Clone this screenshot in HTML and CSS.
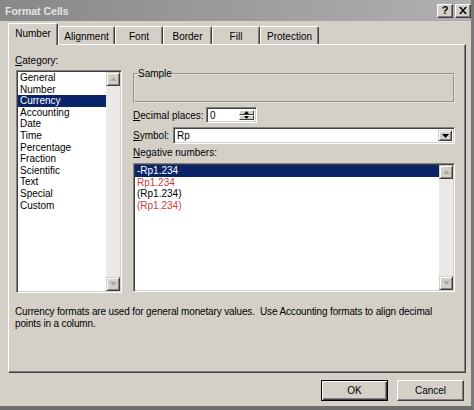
FILE: index.html
```html
<!DOCTYPE html>
<html>
<head>
<meta charset="utf-8">
<link rel="stylesheet" href="styles.css">
</head>
<body>
<div class="window">
  <div class="titlebar">
    <span class="title">Format Cells</span>
    <div class="tb-btns">
      <span class="tb-btn">?</span>
      <span class="tb-btn">
        <svg width="8" height="7" viewBox="0 0 8 7"><path d="M0 0h2l2 2.5L6 0h2L5 3.5 8 7H6L4 4.5 2 7H0l3-3.5z" fill="#000"/></svg>
      </span>
    </div>
  </div>

  <div class="tabs">
    <div class="tab active w-number">Number</div>
    <div class="tab w-align">Alignment</div>
    <div class="tab w-font">Font</div>
    <div class="tab w-border">Border</div>
    <div class="tab w-fill">Fill</div>
    <div class="tab w-prot">Protection</div>
  </div>

  <div class="panel">
    <div class="cols">
      <div class="left-col">
        <div class="label"><u>C</u>ategory:</div>
        <div class="listbox cat-list">
          <div class="items">
            <div class="item">General</div>
            <div class="item">Number</div>
            <div class="item sel">Currency</div>
            <div class="item">Accounting</div>
            <div class="item">Date</div>
            <div class="item">Time</div>
            <div class="item">Percentage</div>
            <div class="item">Fraction</div>
            <div class="item">Scientific</div>
            <div class="item">Text</div>
            <div class="item">Special</div>
            <div class="item">Custom</div>
          </div>
          <div class="scrollbar">
            <div class="sb-btn"><svg width="7" height="4" viewBox="0 0 7 4"><path d="M3.5 0L7 4H0z" fill="#a8a8a8"/></svg></div>
            <div class="sb-track"></div>
            <div class="sb-btn"><svg width="7" height="4" viewBox="0 0 7 4"><path d="M0 0h7L3.5 4z" fill="#a8a8a8"/></svg></div>
          </div>
        </div>
      </div>

      <div class="right-col">
        <fieldset class="sample">
          <legend>Sample</legend>
        </fieldset>

        <div class="row dec-row">
          <span class="row-label dec-label"><u>D</u>ecimal places:</span>
          <div class="spin-box">
            <span class="field-text">0</span>
            <div class="spinner">
              <div class="spin-btn"><svg width="5" height="3" viewBox="0 0 5 3"><path d="M2.5 0L5 3H0z" fill="#000"/></svg></div>
              <div class="spin-btn"><svg width="5" height="3" viewBox="0 0 5 3"><path d="M0 0h5L2.5 3z" fill="#000"/></svg></div>
            </div>
          </div>
        </div>

        <div class="row sym-row">
          <span class="row-label sym-label"><u>S</u>ymbol:</span>
          <div class="combo">
            <span class="field-text">Rp</span>
            <div class="drop-btn"><svg width="7" height="4" viewBox="0 0 7 4"><path d="M0 0h7L3.5 4z" fill="#000"/></svg></div>
          </div>
        </div>

        <div class="label neg-label"><u>N</u>egative numbers:</div>
        <div class="listbox neg-list">
          <div class="items">
            <div class="item sel">-Rp1.234</div>
            <div class="item red">Rp1.234</div>
            <div class="item">(Rp1.234)</div>
            <div class="item red">(Rp1.234)</div>
          </div>
          <div class="scrollbar">
            <div class="sb-btn"><svg width="7" height="4" viewBox="0 0 7 4"><path d="M3.5 0L7 4H0z" fill="#a8a8a8"/></svg></div>
            <div class="sb-track"></div>
            <div class="sb-btn"><svg width="7" height="4" viewBox="0 0 7 4"><path d="M0 0h7L3.5 4z" fill="#a8a8a8"/></svg></div>
          </div>
        </div>
      </div>
    </div>

    <p class="desc">Currency formats are used for general monetary values.&nbsp; Use Accounting formats to align decimal points in a column.</p>
  </div>

  <div class="buttons">
    <div class="btn default">OK</div>
    <div class="btn">Cancel</div>
  </div>
</div>
</body>
</html>
```

FILE: styles.css
```css
* { box-sizing: border-box; }

html, body {
  margin: 0;
  padding: 0;
  background: #d4d0c8;
}

body {
  font-family: "Liberation Sans", Arial, sans-serif;
  font-size: 10px;
  color: #000;
}

.window {
  width: 474px;
  height: 410px;
  background: #d4d0c8;
  display: flex;
  flex-direction: column;
  border-right: 3px solid #7a7a7a;
  border-bottom: 4px solid #6e6e6e;
  overflow: hidden;
}

/* title bar */
.titlebar {
  height: 21px;
  flex: none;
  display: flex;
  align-items: center;
  padding: 0 0 0 5px;
  background: linear-gradient(90deg, #888888 0%, #9c9c9c 50%, #b0b0b0 100%);
}

.title {
  flex: 1;
  color: #e4e4e4;
  font-weight: bold;
  font-size: 10.5px;
}

.tb-btns {
  display: flex;
  gap: 2px;
}

.tb-btn {
  width: 16px;
  height: 14px;
  background: #d4d0c8;
  border: 1px solid;
  border-color: #fff #404040 #404040 #fff;
  box-shadow: inset -1px -1px #808080;
  display: flex;
  align-items: center;
  justify-content: center;
  font-weight: bold;
  font-size: 11px;
  line-height: 1;
}

/* tabs */
.tabs {
  height: 23px;
  flex: none;
  display: flex;
  align-items: flex-end;
  padding-left: 8px;
  position: relative;
  z-index: 1;
}

.tab {
  height: 18px;
  border: 1px solid;
  border-bottom: none;
  border-color: #fff #404040 transparent #fff;
  box-shadow: inset -1px 0 #808080;
  border-radius: 2px 2px 0 0;
  background: #d4d0c8;
  display: flex;
  align-items: center;
  justify-content: center;
  padding-top: 1px;
}

.tab.active {
  height: 22px;
  margin-bottom: -1px;
  padding-top: 0;
  padding-bottom: 2px;
}

.w-number { width: 50px; }
.w-align { width: 57px; }
.w-font { width: 48px; }
.w-border { width: 49px; }
.w-fill { width: 48px; }
.w-prot { width: 59px; }

/* panel */
.panel {
  height: 329px;
  flex: none;
  margin: 0 5px 0 8px;
  border: 1px solid;
  border-color: #fff #404040 #404040 #fff;
  box-shadow: inset -1px -1px #808080;
  padding: 10px 10px 0 7px;
}

.cols {
  display: flex;
  gap: 11px;
}

.left-col {
  width: 106px;
  display: flex;
  flex-direction: column;
}

.label {
  height: 12px;
  line-height: 12px;
  margin-bottom: 3px;
  margin-left: -1px;
}

.listbox {
  background: #fff;
  border: 1px solid;
  border-color: #808080 #fff #fff #808080;
  box-shadow: inset 1px 1px #404040, inset -1px -1px #d4d0c8;
  display: flex;
  padding: 1px;
}

.cat-list { height: 223px; }
.neg-list { height: 129px; }

.items {
  flex: 1;
}

.item {
  height: 11.6px;
  line-height: 11.6px;
  padding-left: 2px;
  white-space: nowrap;
}

.item.sel {
  background: #0a246a;
  color: #fff;
}

.item.red { color: #c8403a; }

.scrollbar {
  width: 14px;
  display: flex;
  flex-direction: column;
}

.sb-btn {
  height: 14px;
  flex: none;
  background: #d4d0c8;
  border: 1px solid;
  border-color: #d4d0c8 #404040 #404040 #d4d0c8;
  box-shadow: inset 1px 1px #fff, inset -1px -1px #808080;
  display: flex;
  align-items: center;
  justify-content: center;
}

.sb-track {
  flex: 1;
  background: #ebe9e5;
}

/* right column */
.right-col {
  width: 322px;
  padding-top: 13px;
  display: flex;
  flex-direction: column;
}

.sample {
  margin: 0;
  padding: 0 4px;
  height: 35px;
  border: 2px groove #e6e3dd;
  border-radius: 0;
}

.sample legend {
  padding: 0;
  margin-left: -1px;
  line-height: 12px;
  height: 12px;
}

.row {
  display: flex;
  align-items: center;
  margin-top: 4px;
}

.dec-row { height: 16px; }
.sym-row { height: 17px; }

.dec-label { width: 73px; }
.sym-label { width: 40px; }

.spin-box, .combo {
  height: 100%;
  background: #fff;
  border: 1px solid;
  border-color: #808080 #fff #fff #808080;
  box-shadow: inset 1px 1px #404040, inset -1px -1px #d4d0c8;
  display: flex;
  align-items: center;
  padding: 2px 2px 2px 3px;
}

.spin-box { width: 51px; }
.combo { width: 282px; }

.field-text { flex: 1; }

.spinner {
  width: 15px;
  height: 100%;
  display: flex;
  flex-direction: column;
}

.spin-btn {
  flex: 1;
  background: #d4d0c8;
  border: 1px solid;
  border-color: #fff #404040 #404040 #fff;
  display: flex;
  align-items: center;
  justify-content: center;
}

.drop-btn {
  width: 14px;
  height: 100%;
  background: #d4d0c8;
  border: 1px solid;
  border-color: #d4d0c8 #404040 #404040 #d4d0c8;
  box-shadow: inset 1px 1px #fff, inset -1px -1px #808080;
  display: flex;
  align-items: center;
  justify-content: center;
}

.neg-label {
  margin-top: 3px;
  margin-bottom: 4px;
  margin-left: 0;
}

.desc {
  margin: 13px 0 0 -1px;
  line-height: 12px;
  width: 445px;
  letter-spacing: -0.15px;
}

/* buttons */
.buttons {
  display: flex;
  justify-content: flex-end;
  gap: 9px;
  margin-top: 7px;
  padding-right: 7px;
}

.btn {
  width: 67px;
  height: 21px;
  background: #d4d0c8;
  border: 1px solid;
  border-color: #fff #404040 #404040 #fff;
  box-shadow: inset -1px -1px #808080;
  display: flex;
  align-items: center;
  justify-content: center;
}

.btn.default {
  border-color: #000;
  box-shadow: inset 1px 1px #fff, inset -1px -1px #404040, inset -2px -2px #808080;
}
```
